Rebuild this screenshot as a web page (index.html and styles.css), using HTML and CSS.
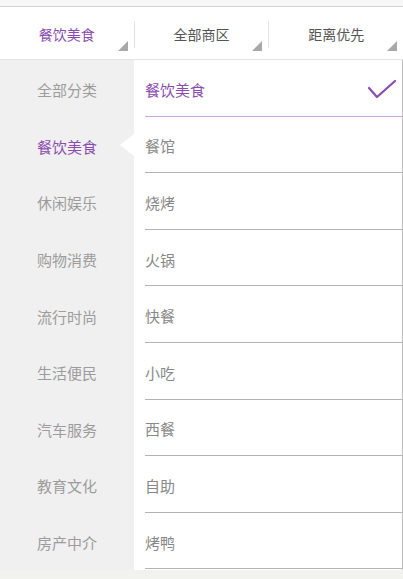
FILE: index.html
```html
<!DOCTYPE html>
<html lang="zh-CN">
<head>
  <meta charset="UTF-8" />
  <meta name="viewport" content="width=device-width, initial-scale=1" />
  <title>分类筛选</title>
  <link rel="stylesheet" href="styles.css">
</head>
<body>
  <div class="topbar"></div>

  <nav class="tabs">
    <div class="tab active">餐饮美食</div>
    <span class="sep"></span>
    <div class="tab">全部商区</div>
    <span class="sep"></span>
    <div class="tab">距离优先</div>
  </nav>

  <div class="panel">
    <ul class="cats">
      <li>全部分类</li>
      <li class="active">餐饮美食</li>
      <li>休闲娱乐</li>
      <li>购物消费</li>
      <li>流行时尚</li>
      <li>生活便民</li>
      <li>汽车服务</li>
      <li>教育文化</li>
      <li>房产中介</li>
    </ul>

    <ul class="subs">
      <li class="active">
        餐饮美食
        <svg class="check" width="30" height="22" viewBox="0 0 30 22">
          <polyline points="2,10 10,19 28,3" fill="none" stroke="#8a4cae" stroke-width="2.2" stroke-linecap="round" stroke-linejoin="round" />
        </svg>
      </li>
      <li>餐馆</li>
      <li>烧烤</li>
      <li>火锅</li>
      <li>快餐</li>
      <li>小吃</li>
      <li>西餐</li>
      <li>自助</li>
      <li>烤鸭</li>
    </ul>
  </div>
</body>
</html>
```

FILE: styles.css
```css
* {
  box-sizing: border-box;
}
body {
  margin: 0;
  font-family: "Noto Sans CJK SC", "Noto Sans", sans-serif;
  background: #f2f2ee;
  color: #888;
}
ul {
  list-style: none;
  margin: 0;
  padding: 0;
}

/* Top strip */
.topbar {
  height: 7px;
  background: #f7f7f7;
  border-bottom: 1px solid #d2d2d2;
}

/* Filter tabs */
.tabs {
  display: flex;
  align-items: center;
  height: 53px;
  background: #fff;
  border-bottom: 1px solid #e4e4e4;
}
.tab {
  position: relative;
  flex: 1;
  height: 100%;
  display: flex;
  align-items: center;
  justify-content: center;
  padding-top: 2px;
  font-size: 14px;
  color: #555;
}
.tab.active {
  color: #8a4cae;
}
.tab::after {
  content: "";
  position: absolute;
  right: 6px;
  bottom: 8px;
  border-left: 10px solid transparent;
  border-bottom: 10px solid #a8a8a8;
}
.sep {
  width: 1px;
  height: 27px;
  margin-top: 2px;
  background: #e2e2e2;
}

/* Category panel */
.panel {
  display: flex;
  height: 510px;
}
.cats {
  width: 134px;
  background: #f0f0f0;
}
.cats li {
  position: relative;
  height: 56.6px;
  display: flex;
  align-items: center;
  justify-content: center;
  font-size: 15px;
  color: #9c9c9c;
  padding-top: 3px;
}
.cats li.active {
  color: #8a4cae;
}
.cats li.active::after {
  content: "";
  position: absolute;
  right: 0;
  top: 50%;
  margin-top: -11px;
  border-top: 11px solid transparent;
  border-bottom: 11px solid transparent;
  border-right: 14px solid #fff;
}
.subs {
  flex: 1;
  background: #fff;
  border-right: 1px solid #bdbdbd;
  padding-left: 11px;
}
.subs li {
  height: 56.6px;
  display: flex;
  align-items: center;
  font-size: 15px;
  color: #888;
  border-bottom: 1px solid #b4b4b4;
  padding-top: 3px;
}
.subs li.active {
  color: #8a4cae;
  border-bottom: 1.5px solid #c9a6dc;
  justify-content: space-between;
  padding-right: 5px;
}
.check {
  display: block;
}
```
